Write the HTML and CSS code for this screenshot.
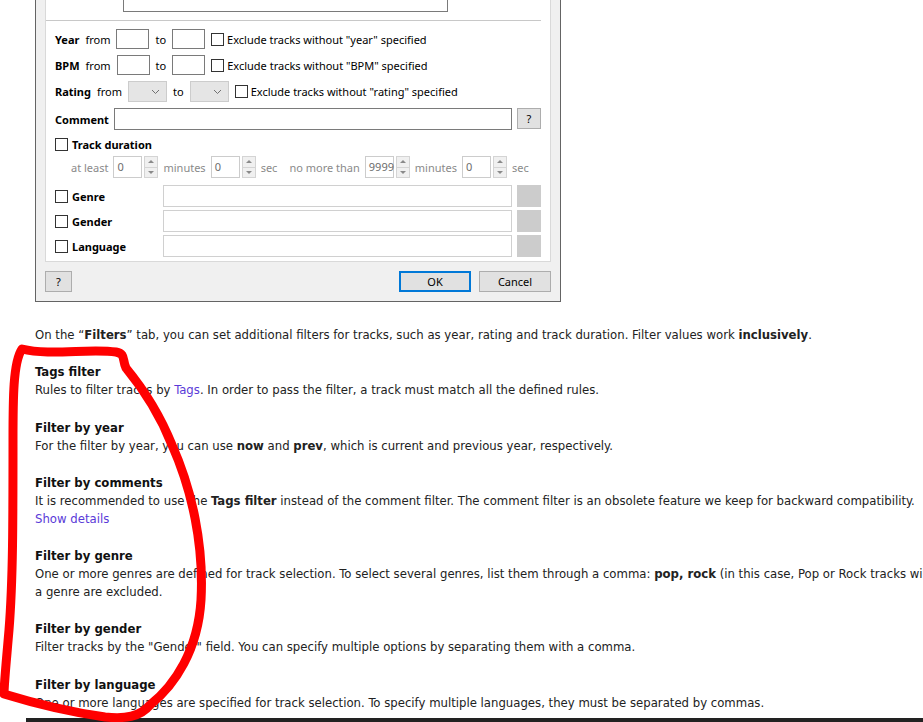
FILE: index.html
```html
<!DOCTYPE html>
<html>
<head>
    <title>Filters</title>
    <meta charset="utf-8">
    <link rel="stylesheet" href="styles.css">
</head>
<body>
    <div class="page">
        <!-- Screenshot of the Filters tab -->
        <div class="dialog">
            <div class="panel">
                <div class="row row-top"><span class="field field-top"></span></div>
                <div class="separator"></div>

                <div class="row row-range row-year">
                    <b>Year</b><span>from</span>
                    <span class="field field-num"></span><span>to</span>
                    <span class="field field-num"></span>
                    <span class="check"><span class="box"></span>Exclude tracks without "year" specified</span>
                </div>
                <div class="row row-range">
                    <b>BPM</b><span>from</span>
                    <span class="field field-num"></span><span>to</span>
                    <span class="field field-num"></span>
                    <span class="check"><span class="box"></span>Exclude tracks without "BPM" specified</span>
                </div>
                <div class="row row-range row-rating">
                    <b>Rating</b><span>from</span>
                    <span class="select"><svg width="9" height="6" viewBox="0 0 9 6"><path d="M1 1l3.5 3.5L8 1" fill="none" stroke="#707070"/></svg></span>
                    <span>to</span>
                    <span class="select"><svg width="9" height="6" viewBox="0 0 9 6"><path d="M1 1l3.5 3.5L8 1" fill="none" stroke="#707070"/></svg></span>
                    <span class="check"><span class="box"></span>Exclude tracks without "rating" specified</span>
                </div>
                <div class="row row-comment">
                    <b>Comment</b>
                    <span class="field field-grow"></span>
                    <span class="btn btn-small">?</span>
                </div>
                <div class="row row-duration">
                    <span class="check"><span class="box"></span><b>Track duration</b></span>
                </div>
                <div class="row row-spins">
                    <span>at least</span>
                    <span class="spin"><span class="spin-value">0</span><span class="spin-arrows"><i class="up"></i><i class="down"></i></span></span>
                    <span>minutes</span>
                    <span class="spin"><span class="spin-value">0</span><span class="spin-arrows"><i class="up"></i><i class="down"></i></span></span>
                    <span>sec</span>
                    <span class="no-more">no more than</span>
                    <span class="spin"><span class="spin-value">9999</span><span class="spin-arrows"><i class="up"></i><i class="down"></i></span></span>
                    <span>minutes</span>
                    <span class="spin"><span class="spin-value">0</span><span class="spin-arrows"><i class="up"></i><i class="down"></i></span></span>
                    <span>sec</span>
                </div>
                <div class="row row-tag row-genre">
                    <span class="check tag-label"><span class="box"></span><b>Genre</b></span>
                    <span class="field field-grow field-off"></span>
                    <span class="pick"></span>
                </div>
                <div class="row row-tag">
                    <span class="check tag-label"><span class="box"></span><b>Gender</b></span>
                    <span class="field field-grow field-off"></span>
                    <span class="pick"></span>
                </div>
                <div class="row row-tag">
                    <span class="check tag-label"><span class="box"></span><b>Language</b></span>
                    <span class="field field-grow field-off"></span>
                    <span class="pick"></span>
                </div>
            </div>
            <div class="dialog-footer">
                <span class="btn btn-help">?</span>
                <span class="spacer"></span>
                <span class="btn btn-default">OK</span>
                <span class="btn">Cancel</span>
            </div>
        </div>

        <p class="intro">On the “<b>Filters</b>” tab, you can set additional filters for tracks, such as year, rating and track duration. Filter values work <b>inclusively</b>.</p>

        <div class="topic">
            <h4>Tags filter</h4>
            <p>Rules to filter tracks by <a href="#">Tags</a>. In order to pass the filter, a track must match all the defined rules.</p>
        </div>
        <div class="topic">
            <h4>Filter by year</h4>
            <p>For the filter by year, you can use <b>now</b> and <b>prev</b>, which is current and previous year, respectively.</p>
        </div>
        <div class="topic">
            <h4>Filter by comments</h4>
            <p>It is recommended to use the <b>Tags filter</b> instead of the comment filter. The comment filter is an obsolete feature we keep for backward compatibility.</p>
            <a class="more" href="#">Show details</a>
        </div>
        <div class="topic">
            <h4>Filter by genre</h4>
            <p>One or more genres are defined for track selection. To select several genres, list them through a comma: <b>pop, rock</b> (in this case, Pop or Rock tracks will be selected). Tracks without a genre are excluded.</p>
        </div>
        <div class="topic">
            <h4>Filter by gender</h4>
            <p>Filter tracks by the "Gender" field. You can specify multiple options by separating them with a comma.</p>
        </div>
        <div class="topic">
            <h4>Filter by language</h4>
            <p>One or more languages are specified for track selection. To specify multiple languages, they must be separated by commas.</p>
        </div>
    </div>
    <div class="page-footer"></div>

    <!-- hand-drawn marker on top of the page -->
    <svg class="scribble" width="923" height="722" viewBox="0 0 923 722">
        <path d="M126 368 C122 360 126 354 116 352 C90 348 50 356 22 349 C13 362 13 400 13 440 C13 520 13 580 9 630 C6 665 4 685 4 694 C30 702 70 712 105 717 C125 719 140 717 150 705 C175 685 198 650 201 600 C204 545 192 490 172 445 C158 410 140 385 126 368" fill="none" stroke="#f00" stroke-width="9" stroke-linecap="round" stroke-linejoin="round"/>
    </svg>
</body>
</html>
```

FILE: styles.css
```css
html, body {
    margin: 0;
    overflow: hidden;
}

body {
    background: #fff;
    position: relative;
    font-family: "DejaVu Sans", Verdana, sans-serif;
    color: #222;
}

.page {
    width: 1070px;
    padding-left: 35px;
}

/* dialog screenshot */
.dialog {
    width: 524px;
    margin-top: -19px;
    border: 1px solid #646464;
    background: #f0f0f0;
    font-family: "Noto Sans", "Liberation Sans", sans-serif;
    font-size: 11px;
    color: #000;
}

.panel {
    margin: 0 9px;
    border: 1px solid #d9d9d9;
    border-top: none;
    background: #fff;
    padding: 0 9px 4px 9px;
}

.row {
    display: flex;
    align-items: center;
    gap: 6px;
    white-space: nowrap;
}

.row b {
    font-weight: 700;
}

.row-top {
    height: 30px;
    align-items: flex-end;
}

.field {
    box-sizing: border-box;
    display: inline-block;
    height: 100%;
    background: #fff;
    border: 1px solid #7a7a7a;
}

.field-top {
    width: 325px;
    height: 30px;
    margin-left: 68px;
}

.separator {
    height: 1px;
    background: #c8c8c8;
    margin: 8px 0 0 -9px;
}

.row-range {
    height: 20px;
    margin-top: 6px;
}

.row-year {
    margin-top: 8px;
}

.field-num {
    width: 33px;
}

.check {
    display: inline-flex;
    align-items: center;
    gap: 3px;
}

.box {
    box-sizing: border-box;
    width: 13px;
    height: 13px;
    border: 1px solid #333;
    background: #fff;
}

.row-rating {
    height: 21px;
}

.select {
    box-sizing: border-box;
    width: 39px;
    height: 21px;
    background: #e5e5e5;
    border: 1px solid #ccc;
    display: flex;
    align-items: center;
    justify-content: flex-end;
    padding-right: 6px;
}

.row-comment {
    height: 22px;
    margin-top: 6px;
    gap: 5px;
}

.field-grow {
    flex: 1;
}

.btn {
    box-sizing: border-box;
    display: inline-flex;
    align-items: center;
    justify-content: center;
    width: 72px;
    height: 21px;
    background: #e1e1e1;
    border: 1px solid #adadad;
    color: #000;
}

.btn-small {
    width: 24px;
    height: 21px;
    align-self: flex-start;
}

.row-duration {
    height: 18px;
    margin-top: 5px;
}

.row-duration .check {
    gap: 4px;
}

.row-spins {
    height: 22px;
    margin-top: 3px;
    padding-left: 16px;
    gap: 5px;
    color: #8a8a8a;
}

.no-more {
    margin-left: 7px;
}

.spin {
    display: flex;
    height: 22px;
    gap: 2px;
}

.spin-value {
    box-sizing: border-box;
    width: 29px;
    height: 22px;
    border: 1px solid #ccc;
    padding-left: 3px;
    color: #6d6d6d;
    line-height: 20px;
}

.spin-arrows {
    box-sizing: border-box;
    width: 14px;
    height: 22px;
    border: 1px solid #d4d4d4;
    background: #f0f0f0;
    display: flex;
    flex-direction: column;
}

.spin-arrows i {
    flex: 1;
    display: flex;
    align-items: center;
    justify-content: center;
}

.spin-arrows i::before {
    content: "";
    border-left: 3px solid transparent;
    border-right: 3px solid transparent;
}

.spin-arrows .up {
    border-bottom: 1px solid #d4d4d4;
}

.spin-arrows .up::before {
    border-bottom: 3px solid #8a8a8a;
}

.spin-arrows .down::before {
    border-top: 3px solid #8a8a8a;
}

.row-tag {
    height: 22px;
    margin-top: 3px;
    gap: 5px;
}

.row-genre {
    margin-top: 7px;
}

.tag-label {
    width: 103px;
    gap: 4px;
}

.field-off {
    border-color: #d0d0d0;
}

.pick {
    width: 24px;
    height: 22px;
    background: #cccccc;
}

.dialog-footer {
    display: flex;
    gap: 8px;
    padding: 9px;
}

.spacer {
    flex: 1;
}

.btn-help {
    width: 27px;
}

.btn-default {
    border-color: #0078d7;
    box-shadow: inset 0 0 0 1px #0078d7;
}

/* article text */
.intro,
.topic p,
.more {
    margin: 0;
    font-size: 13px;
    line-height: 18px;
    font-stretch: condensed;
}

.intro {
    margin-top: 24px;
}

.topic {
    margin-top: 19.3px;
}

.topic h4 {
    margin: 0;
    font-size: 13px;
    line-height: 18px;
    font-stretch: condensed;
    color: #111;
}

a {
    color: #5a3ad8;
    text-decoration: none;
}

.more {
    display: block;
}

.page-footer {
    margin: 6px 0 0 26px;
    height: 20px;
    background: #222;
}

.scribble {
    position: absolute;
    top: 0;
    left: 0;
    pointer-events: none;
}
```
